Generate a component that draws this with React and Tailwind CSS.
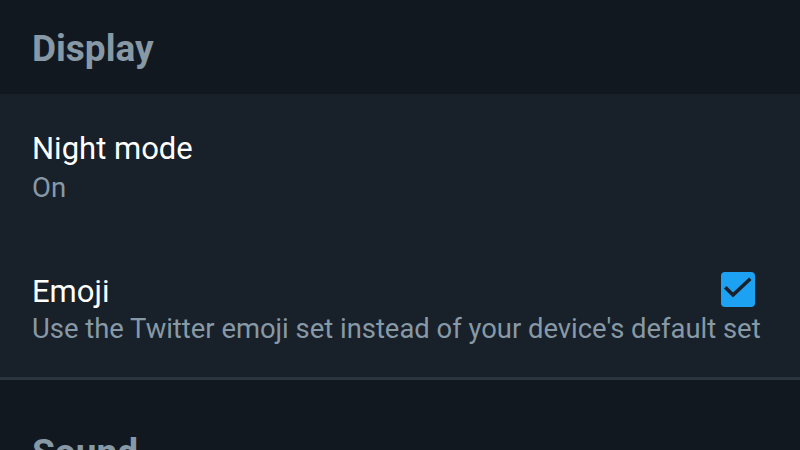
import React from 'react';

const font = { fontFamily: 'Roboto, "Noto Sans", sans-serif' };

function SectionTitle({ children }) {
  return (
    <div className="bg-[#121820] px-8">
      <h2 className="text-[37px] font-bold leading-none text-[#8899a6]">{children}</h2>
    </div>
  );
}

export default function App() {
  return (
    <div className="w-[800px] h-[450px] overflow-hidden bg-[#121820]" style={font}>
      <div className="h-[94px] pt-[30px]">
        <SectionTitle>Display</SectionTitle>
      </div>

      <div className="bg-[#18202a] border-b-[3px] border-[#2b353f]">
        {/* Night mode */}
        <div className="px-8 pt-[39px]">
          <p className="text-[31px] leading-none text-white">Night mode</p>
          <p className="mt-[10px] text-[27.5px] leading-none text-[#8899a6]">On</p>
        </div>

        {/* Emoji */}
        <div className="pl-8 pt-[74px] pb-[34px]">
          <div className="flex items-start justify-between pr-[45px]">
            <p className="text-[31px] leading-none text-white">Emoji</p>
            <div className="-mt-[4px] w-[34px] h-[35px] rounded-[4px] bg-[#1da1f2]">
              <svg width="34" height="35" viewBox="0 0 34 35" fill="none">
                <path d="M5.5 16.5l6.5 6.5L28 8" stroke="#18202a" strokeWidth="3.6" strokeLinecap="square" />
              </svg>
            </div>
          </div>
          <p className="mt-[9px] text-[27.4px] leading-none text-[#8899a6] whitespace-nowrap">
            Use the Twitter emoji set instead of your device's default set
          </p>
        </div>
      </div>

      <div className="pt-[54px]">
        <SectionTitle>Sound</SectionTitle>
      </div>
    </div>
  );
}
